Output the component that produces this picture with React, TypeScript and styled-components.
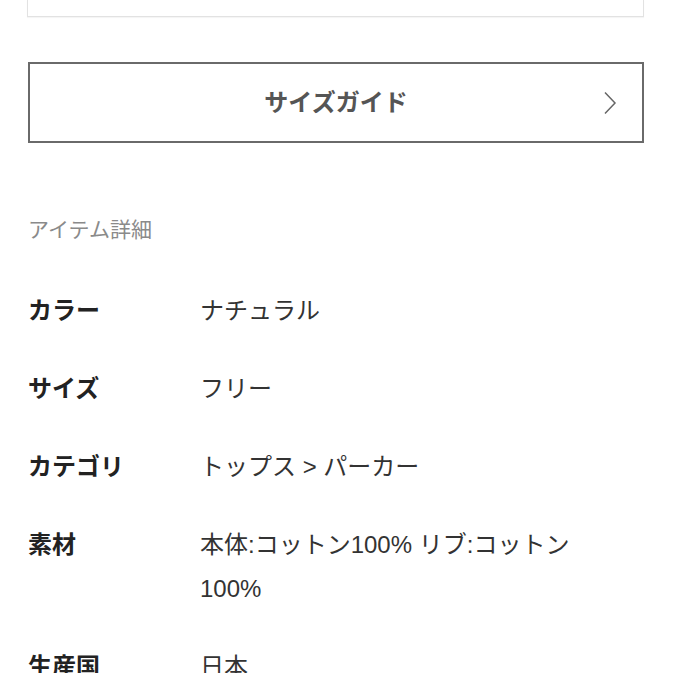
import React from "react";
import styled, { createGlobalStyle } from "styled-components";

const GlobalStyle = createGlobalStyle`
  body {
    margin: 0;
    background: #fff;
    font-family: "Liberation Sans", "Noto Sans CJK JP", sans-serif;
  }
`;

interface Detail {
  label: string;
  value: string;
}

const DETAILS: Detail[] = [
  { label: "カラー", value: "ナチュラル" },
  { label: "サイズ", value: "フリー" },
  { label: "カテゴリ", value: "トップス > パーカー" },
  { label: "素材", value: "本体:コットン100% リブ:コットン100%" },
  { label: "生産国", value: "日本" },
];

const ChevronRight = () => (
  <svg width="16" height="24" viewBox="0 0 16 24" fill="none">
    <path d="M3 1.5 L13 12 L3 22.5" stroke="#666" strokeWidth="1.5" />
  </svg>
);

export default function App() {
  return (
    <>
      <GlobalStyle />
      <Page>
        <PrevCard />
        <GuideButton type="button">
          <GuideLabel>サイズガイド</GuideLabel>
          <GuideIcon>
            <ChevronRight />
          </GuideIcon>
        </GuideButton>
        <SectionTitle>アイテム詳細</SectionTitle>
        <DetailList>
          {DETAILS.map((d) => (
            <DetailRow key={d.label}>
              <DetailLabel>{d.label}</DetailLabel>
              <DetailValue>{d.value}</DetailValue>
            </DetailRow>
          ))}
        </DetailList>
      </Page>
    </>
  );
}

const Page = styled.div`
  padding: 0 29px 0 28px;
  display: flex;
  flex-direction: column;
`;

const PrevCard = styled.div`
  height: 16px;
  margin-left: -1px;
  border: 1px solid #e2e2e2;
  border-top: none;
  box-shadow: 0 1px 1px rgba(0, 0, 0, 0.04);
`;

const GuideButton = styled.button`
  margin-top: 45px;
  height: 81px;
  border: 2px solid #6a6a6a;
  background: #fff;
  display: flex;
  align-items: center;
  justify-content: center;
  position: relative;
  padding: 0 0 4px;
  font-family: inherit;
  cursor: pointer;
`;

const GuideLabel = styled.span`
  font-family: "Noto Sans CJK JP", sans-serif;
  font-size: 24px;
  font-weight: 700;
  color: #555;
`;

const GuideIcon = styled.span`
  position: absolute;
  right: 24px;
  top: 50%;
  transform: translateY(-50%);
  display: flex;
`;

const SectionTitle = styled.h2`
  margin: 72px 0 0;
  font-size: 21px;
  font-weight: 400;
  line-height: 30px;
  color: #8a8a8a;
`;

const DetailList = styled.dl`
  margin: 44px 0 0;
  display: flex;
  flex-direction: column;
  gap: 34px;
`;

const DetailRow = styled.div`
  display: grid;
  grid-template-columns: 172px 1fr;
  line-height: 44px;
`;

const DetailLabel = styled.dt`
  font-size: 24px;
  font-weight: 700;
  color: #222;
`;

const DetailValue = styled.dd`
  margin: 0;
  font-size: 24px;
  font-weight: 400;
  color: #333;
  max-width: 420px;
`;
